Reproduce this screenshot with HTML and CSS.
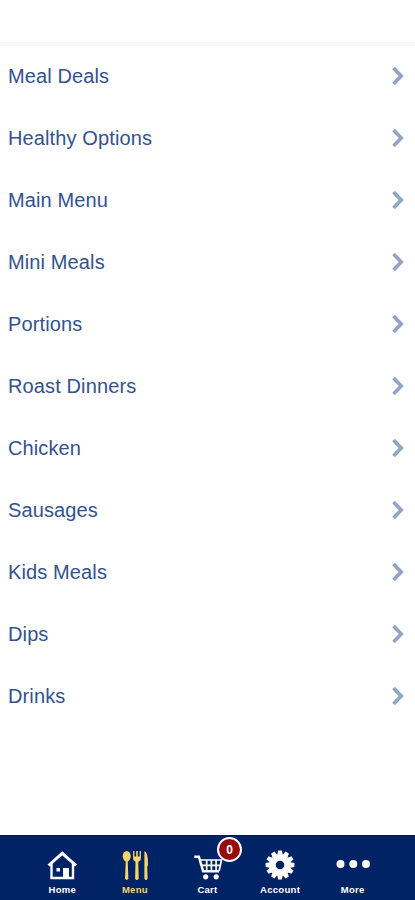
FILE: index.html
```html
<!DOCTYPE html>
<html lang="en">
<head>
<meta charset="utf-8">
<title>Menu</title>
<link rel="stylesheet" href="styles.css">
</head>
<body>
<svg class="defs" aria-hidden="true"><symbol id="chevron" viewBox="0 0 14 20"><path d="M2.5 2 10.2 10 2.5 18" fill="none" stroke="currentColor" stroke-width="3.7"/></symbol></svg>
<header class="topbar"></header>
<main class="list">
  <a class="row"><span>Meal Deals</span><svg class="chevron"><use href="#chevron"/></svg></a>
  <a class="row"><span>Healthy Options</span><svg class="chevron"><use href="#chevron"/></svg></a>
  <a class="row"><span>Main Menu</span><svg class="chevron"><use href="#chevron"/></svg></a>
  <a class="row"><span>Mini Meals</span><svg class="chevron"><use href="#chevron"/></svg></a>
  <a class="row"><span>Portions</span><svg class="chevron"><use href="#chevron"/></svg></a>
  <a class="row"><span>Roast Dinners</span><svg class="chevron"><use href="#chevron"/></svg></a>
  <a class="row"><span>Chicken</span><svg class="chevron"><use href="#chevron"/></svg></a>
  <a class="row"><span>Sausages</span><svg class="chevron"><use href="#chevron"/></svg></a>
  <a class="row"><span>Kids Meals</span><svg class="chevron"><use href="#chevron"/></svg></a>
  <a class="row"><span>Dips</span><svg class="chevron"><use href="#chevron"/></svg></a>
  <a class="row"><span>Drinks</span><svg class="chevron"><use href="#chevron"/></svg></a>
</main>
<nav class="tabs">
  <a class="tab">
    <svg class="icon" viewBox="0 0 44 34"><path d="M11.5 13v16h21.5V13" fill="none" stroke="currentColor" stroke-width="2.4"/><path d="M8.5 16.5 22.2 4.3 36 16.5" fill="none" stroke="currentColor" stroke-width="3"/><path d="M23 19h6v10h-6zM16.5 19h3.5v3.5h-3.5z" fill="currentColor"/></svg>
    <span>Home</span>
  </a>
  <a class="tab tab-active">
    <svg class="icon" viewBox="0 0 44 34"><g fill="currentColor"><ellipse cx="13.7" cy="7.2" rx="4" ry="5.3"/><path d="M12.8 11h1.9l.7 18.8q-1.7 2.2-3.4 0z"/><path d="M20.1 2h1.3v5.5h1.8V2h1.6v5.5h1.8V2h1.3v7.5q0 2.4-2.6 3.2l.4 17q-1.8 2.4-3.6 0l.4-17q-2.4-.8-2.4-3.2z"/><path d="M31.4 2q3.6 1 3.6 13 0 2.6-.8 2.6l.4 12.2q-1.6 2.4-3.2 0z"/></g></svg>
    <span>Menu</span>
  </a>
  <a class="tab">
    <svg class="icon" viewBox="0 0 44 34"><path d="M9.3 7.8h4.6l4.2 14.4h16" fill="none" stroke="currentColor" stroke-width="2.4"/><path d="M15 11h21.5l-2.4 11M16.4 16.3h19.2M21.7 11v11M26.4 11v11M31.1 11v11" fill="none" stroke="currentColor" stroke-width="1.7"/><circle cx="20.7" cy="27.8" r="2.6" fill="currentColor"/><circle cx="31.2" cy="27.8" r="2.6" fill="currentColor"/></svg>
    <b class="badge">0</b>
    <span>Cart</span>
  </a>
  <a class="tab">
    <svg class="icon" viewBox="-22 -16 44 34"><g fill="currentColor"><g id="teeth"><path id="tooth" d="M-3-9-1.9-14.4H1.9L3-9V9L1.9 14.4H-1.9L-3 9z"/><use href="#tooth" transform="rotate(30)"/><use href="#tooth" transform="rotate(60)"/></g><use href="#teeth" transform="rotate(90)"/><circle r="10.5"/></g><circle class="hub" r="4.3"/></svg>
    <span>Account</span>
  </a>
  <a class="tab">
    <svg class="icon" viewBox="0 0 44 34"><g fill="currentColor"><circle cx="9.5" cy="15" r="4"/><circle cx="22.3" cy="15" r="4"/><circle cx="35" cy="15" r="4"/></g></svg>
    <span>More</span>
  </a>
</nav>
</body>
</html>
```
FILE: styles.css
```css
* { box-sizing: border-box; }
body {
  margin: 0;
  height: 900px;
  display: flex;
  flex-direction: column;
  background: #fff;
  font-family: "Liberation Sans", Arial, sans-serif;
}
.defs { position: absolute; width: 0; height: 0; }
.topbar {
  height: 46px;
  border-bottom: 4px solid #f7f7f7;
}
.list { flex: 1; }
.row {
  display: flex;
  align-items: center;
  justify-content: space-between;
  height: 62px;
  padding: 0 10px 2px 8px;
  color: #34528f;
  font-size: 20px;
  letter-spacing: 0.12px;
}
.chevron { width: 14px; height: 20px; color: #93a5c7; }
.tabs {
  display: flex;
  height: 65px;
  padding: 13px 26px 0;
  background: #002366;
  border-top: 1px solid #001a50;
}
.tab {
  position: relative;
  flex: 1;
  display: flex;
  flex-direction: column;
  align-items: center;
  color: #fff;
  font-size: 9.5px;
  font-weight: bold;
  line-height: 13px;
  letter-spacing: 0.3px;
}
.tab-active { color: #f5d46b; }
.icon { width: 44px; height: 34px; }
.hub { fill: #002366; }
.badge {
  position: absolute;
  top: -12px;
  left: 46px;
  width: 25px;
  height: 25px;
  border: 2px solid #fff;
  border-radius: 50%;
  background: #980b0b;
  font-size: 12px;
  line-height: 22px;
  text-align: center;
}
```
